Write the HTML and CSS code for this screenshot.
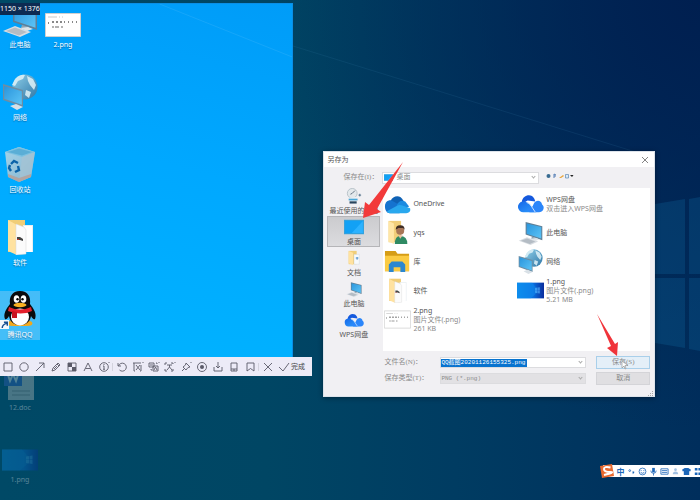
FILE: index.html
```html
<!DOCTYPE html>
<html lang="zh-CN">
<head>
<meta charset="utf-8">
<title>另存为</title>
<link rel="stylesheet" href="styles.css">
</head>
<body>
<svg class="defs" aria-hidden="true">
  <defs>
    <linearGradient id="scr" x1="0" y1="0" x2="1" y2="1"><stop offset="0" stop-color="#2a95dc"/><stop offset="1" stop-color="#5cc4f6"/></linearGradient>
    <linearGradient id="globe" x1="0" y1="0" x2="1" y2="1"><stop offset="0" stop-color="#8fd0ea"/><stop offset="1" stop-color="#2f76a6"/></linearGradient>
    <linearGradient id="bin" x1="0" y1="0" x2="1" y2="1"><stop offset="0" stop-color="#a5d4ea"/><stop offset="1" stop-color="#86b4cd"/></linearGradient>
    <linearGradient id="wall" x1="0" y1="0" x2="1" y2="0"><stop offset="0" stop-color="#0a86e8"/><stop offset=".6" stop-color="#0a6fe0"/><stop offset="1" stop-color="#0a2c9c"/></linearGradient>
    <linearGradient id="wps" x1="0" y1="0" x2="1" y2="1"><stop offset="0" stop-color="#1567e8"/><stop offset="1" stop-color="#2f9dff"/></linearGradient>
  </defs>
  <symbol id="i-pc" viewBox="0 0 36 36">
    <path d="M11 3l24 6v20l-24-8z" fill="#5f7f96"/><path d="M12.500 5l21 5.200v16.600l-21-7z" fill="url(#scr)"/>
    <path d="M20 24l7 2-1 3-7-2z" fill="#8fa3b2"/><path d="M1 30l12-5 16 6-11 5z" fill="#d8dde2"/><path d="M4 30l9-3.500 12 4.500-8 3.500z" fill="#b4bcc4"/>
    <path d="M18 27l8-1 5 2-6 2z" fill="#dfe4e8"/>
  </symbol>
  <symbol id="i-net" viewBox="0 0 36 36">
    <circle cx="23" cy="13" r="12.500" fill="url(#globe)"/>
    <path d="M13 5q5-5 10-4l-2 4-5 2-3 5-3-1zM25 2l6 3 3 6-2 5-4-5-2-4zM24 16l5 2-2 6-4-3z" fill="#dff2f8" opacity=".85"/>
    <path d="M1 10l20 6v17L1 26z" fill="#6d8da3"/><path d="M2.200 12l17.600 5.200v13.600L2.200 24.800z" fill="url(#scr)"/>
    <path d="M8 32l6-2 7 3-6 3z" fill="#d8e0e6"/>
  </symbol>
  <symbol id="i-bin" viewBox="0 0 36 36">
    <path d="M3 6l14-5 16 5-4 25-12 5-11-5z" fill="url(#bin)"/><path d="M3 6l14-5 16 5-13 5z" fill="#7cc2e2"/><path d="M6 6l11-3.500L30 6l-10 3.500z" fill="#5aaed6"/>
    <path d="M20 11l13-5-4 25-12 5z" fill="#a7c3d3" opacity=".7"/><path d="M6 31l11 5 12-5v-3l-12 4-11-4z" fill="#b79e96" opacity=".8"/>
    <path d="M9 18l3-3 4 2M16 20l1 4-4 2M9 25l-2-3 1-3" fill="none" stroke="#0b63a8" stroke-width="2.400"/>
  </symbol>
  <symbol id="i-folder" viewBox="0 0 36 36">
    <path d="M6 1h17v32H6z" fill="#f0cd77"/><path d="M6 1l9 5v30l-9-4z" fill="#ffe2a0"/>
    <path d="M21 6h10v27H21z" fill="#e9eef2"/><path d="M22 7h8v26h-8z" fill="#fff"/><path d="M14 5l8 3 2 3v24l-10 1z" fill="#fbfbfb" stroke="#d4d4d4" stroke-width=".5"/>
    <path d="M15 18l3 0 3 2v2l-3-1-3 0z" fill="#444"/><path d="M15 20h2v1h-2z" fill="#c63b2b"/>
  </symbol>
  <symbol id="i-qq" viewBox="0 0 36 36">
    <path d="M6 31q6-4 12 0 6-4 12 0 2 4-5 4H11q-7 0-5-4z" fill="#f2a81d"/>
    <path d="M18 0C10 0 7 6 8 13 4 18 1 23 3 28c1 1 3-1 4-3 1 6 5 9 11 9s10-3 11-9c1 2 3 4 4 3 2-5-1-10-5-15C29 6 26 0 18 0z" fill="#0b0b0d"/>
    <ellipse cx="18" cy="26" rx="9" ry="8.500" fill="#fff"/><ellipse cx="14.500" cy="8" rx="2.800" ry="3.800" fill="#fff"/><ellipse cx="21.500" cy="8" rx="2.800" ry="3.800" fill="#fff"/>
    <circle cx="15.500" cy="8.300" r="1.200"/><circle cx="20.500" cy="8.300" r="1.200"/><ellipse cx="18" cy="14" rx="6.500" ry="2.200" fill="#f9b221"/>
    <path d="M7 16q11 5 22 0l1 4q-11 5-24 0z" fill="#e3202c"/><path d="M10 20l5 1v6h-5z" fill="#c9131f"/>
  </symbol>
  <symbol id="i-shot" viewBox="0 0 36 24">
    <path d="M.5.5h35v23H.5z" fill="#fff" stroke="#d0d0d0"/><path d="M3 4h9M14 4h1M17 4h1" stroke="#c9c9c9"/>
    <path d="M3 10h1M7 9h2M11 9h2M15 9h2M19 9h1M23 9h1M27 9h1M31 9h1" stroke="#888" stroke-width="2"/><path d="M7 14h2M10 14h4M16 14h2" stroke="#999" stroke-width="1.500"/>
  </symbol>
  <symbol id="i-wall" viewBox="0 0 36 21">
    <path d="M0 0h36v21H0z" fill="url(#wall)"/><path d="M0 0h20l7 8v5l-9 8H0z" fill="#139af5" opacity=".35"/><path d="M24 7l3-.5v3.500h-3zM27.500 6.500l3-.5v4h-3zM24 10.500h3v3.500l-3-.5zM27.500 10.500h3v4l-3-.5z" fill="#59b6ff" opacity=".6"/>
  </symbol>
  <symbol id="i-doc" viewBox="0 0 36 36">
    <path d="M6 2h26v34H6z" fill="#e0d2c6"/><path d="M10 27h18M10 31h18" stroke="#9c8f86"/><path d="M2 4h18v18H2z" fill="#3b63c4"/><path d="M5 8l3 9 3-7 3 7 3-9" fill="none" stroke="#fff" stroke-width="2"/>
  </symbol>
  <symbol id="i-onedrive" viewBox="0 0 28 20">
    <path d="M7 7C9 2 17 0 20 7l-2 6-11 2z" fill="#0f62b5"/><path d="M1 13c0-5 4-7 7-6l14 8-6 5H6c-3 0-5-3-5-7z" fill="#1573cf"/>
    <path d="M13 12c2-5 6-6 9-4l4 5-5 3z" fill="#1b8be0"/><path d="M3 18l11-6q2-1 5 0l8 3c1 3-1 5-4 5H6q-2 0-3-2z" fill="#29a8ee"/>
  </symbol>
  <symbol id="i-wpscloud" viewBox="0 0 28 20">
    <path d="M5 8C6 1 15-1 18 5l1 3-8-1-5 3z" fill="#1559dd"/><path d="M7 19a5.500 5.500 0 0 1-1-11c4-1 7 2 9 5l5 6z" fill="url(#wps)"/>
    <path d="M13 19l-3-3q6-1 7-5c2-5 8-5 9 0 3 2 2 8-3 8z" fill="#2b86fa"/><path d="M10 9q3 0 5 4l4 6" fill="none" stroke="#cfe4ff" stroke-width="1"/>
  </symbol>
  <symbol id="i-user" viewBox="0 0 28 28">
    <path d="M4 1h14v24H4z" fill="#f1cf7b"/><path d="M4 1l6 3v23l-6-3z" fill="#ffe6a6"/><circle cx="17" cy="12" r="4.500" fill="#a87657"/><path d="M12 11q0-5 5-5t5 5l-2-2h-5z" fill="#3f2d25"/>
    <path d="M11 27q0-9 6-9 8 0 8 9z" fill="#2f8a63"/><path d="M15 17l2 4 3-4z" fill="#e9c1a4"/>
  </symbol>
  <symbol id="i-lib" viewBox="0 0 28 22">
    <path d="M1 0h11l2 3h12v18H1z" fill="#d69d16"/><path d="M1 5h25v16H1z" fill="#fbcb42"/><path d="M5 22v-8l3-3h11l3 3v8h-5v-5h-7v5z" fill="#2c87cf"/>
  </symbol>
  <symbol id="i-desk" viewBox="0 0 18 13"><path d="M0 0h18v13H0z" fill="#35a1dc"/><path d="M1 1h16v11H1z" fill="#12a1f5"/><path d="M17 1v11H7z" fill="#2cb2ff"/></symbol>
  <symbol id="i-recent" viewBox="0 0 20 18">
    <circle cx="8" cy="6" r="5.500" fill="#e3e8eb" stroke="#b4bfc6"/><path d="M8 6l3-3M8 6l-2 1" stroke="#567"/><path d="M4 11l8-1 1 3-8 1z" fill="#eef3f7"/><path d="M4 12h10v2H4z" fill="#49a6d7"/><path d="M5 15h8v2.500H5z" fill="#28455e"/><path d="M15 8h3M16.500 6.500v3" stroke="#4b6b84"/>
  </symbol>
  <symbol id="i-docs" viewBox="0 0 18 18"><path d="M3 1h9v15H3z" fill="#f0cd77"/><path d="M3 1l5 2v14l-5-2z" fill="#ffe2a0"/><path d="M9 5h6v11H9z" fill="#f7fafc" stroke="#cfd8df" stroke-width=".5"/><path d="M11 9h3M12.500 8v3" stroke="#4487c7"/></symbol>
</svg>

<main class="desktop">
  <svg class="wallpaper" viewBox="0 0 700 500" preserveAspectRatio="none" aria-hidden="true">
    <path d="M293 46L655 158" stroke="#3c84b0" opacity=".14"/>
    <path d="M655 204l30-5v75h-30zM689 199l11-2v77h-11zM655 278h30v70l-30-5zM689 278h11v73l-11-2z" fill="#1584bd" opacity=".2"/>
  </svg>

  <section class="snip" aria-label="截图区域">
    <svg viewBox="0 0 293 354" preserveAspectRatio="none" aria-hidden="true"><path d="M160 0L293 53" stroke="#fff" opacity=".08"/></svg>
  </section>

  <div class="icons">
    <a href="#pc" class="icon"><svg><use href="#i-pc"/></svg><span>此电脑</span></a>
    <a href="#p2" class="icon second"><svg class="thumb"><use href="#i-shot"/></svg><span>2.png</span></a>
    <a href="#net" class="icon"><svg><use href="#i-net"/></svg><span>网络</span></a>
    <a href="#bin" class="icon"><svg><use href="#i-bin"/></svg><span>回收站</span></a>
    <a href="#soft" class="icon"><svg><use href="#i-folder"/></svg><span>软件</span></a>
    <a href="#qq" class="icon active"><svg><use href="#i-qq"/></svg><span>腾讯QQ</span>
      <svg class="shortcut" viewBox="0 0 8 8"><path d="M0 0h8v8H0z" fill="#f4f8fb"/><path d="M2 7q0-3 4-4M3.500 2H6.500V5" fill="none" stroke="#164f91" stroke-width="1.300"/></svg></a>
    <a href="#doc" class="icon dim"><svg><use href="#i-doc"/></svg><span>12.doc</span></a>
    <a href="#p1" class="icon dim"><svg class="thumb"><use href="#i-wall"/></svg><span>1.png</span></a>
  </div>
  <output class="snip-size">1150 × 1376</output>

  <div class="tools" role="toolbar" aria-label="截图工具">
    <button aria-label="矩形"><svg viewBox="0 0 12 12"><path d="M2 2h8v8H2z"/></svg></button>
    <button aria-label="椭圆"><svg viewBox="0 0 12 12"><circle cx="6" cy="6" r="4.200"/></svg></button>
    <button aria-label="箭头"><svg viewBox="0 0 12 12"><path d="M2 10l8-8M5 2h5v5"/></svg></button>
    <button aria-label="画笔"><svg viewBox="0 0 12 12"><path d="M2 10l1-3 5-5 2 2-5 5zM7 3l2 2M4 8l3-3"/></svg></button>
    <button aria-label="马赛克"><svg viewBox="0 0 12 12"><path d="M2 2h8v8H2z"/><path class="fill" d="M2 2h4v4H2zM6 6h4v4H6z"/></svg></button>
    <button aria-label="文字"><svg viewBox="0 0 12 12"><path d="M2 10l4-8 4 8M3.500 7.500h5"/></svg></button>
    <button aria-label="序号"><svg viewBox="0 0 12 12"><circle cx="6" cy="6" r="4.300"/><path d="M5 5h1v3M5 8.300h2M6 3v1M11 1v1"/></svg></button>
    <i></i>
    <button aria-label="撤销"><svg viewBox="0 0 12 12"><path d="M2 2v3h3M2.500 5a4 4 0 1 1 1 4"/></svg></button>
    <button aria-label="长截图"><svg viewBox="0 0 12 12"><path d="M1 2h8M2 2v8M9 4v6M2 10h1M8 10h1M4 4l4 5M8 4L4 9M11 1v1"/></svg></button>
    <button aria-label="翻译"><svg viewBox="0 0 12 12"><path d="M1 2h5v4H1zM5 5h5v5H5zM2 4h3M3 8v1h1M6 9l1.500-3L9 9M8 2h1v1M11 1v1"/></svg></button>
    <button aria-label="识别文字"><svg viewBox="0 0 12 12"><path d="M1 4V2h2M7 2h2v1M1 8v2h2M7 10h2V8M3 4h5M5.500 4v2L3 9M5.500 6L8 9M11 1v1"/></svg></button>
    <button aria-label="钉住"><svg viewBox="0 0 12 12"><path d="M6 2l4 4-2 .5L6 9 3 6l2.500-2zM4.500 7.500L2 10M11 1v1"/></svg></button>
    <button aria-label="录制"><svg viewBox="0 0 12 12"><circle cx="6" cy="6" r="4.500"/><circle class="fill" cx="6" cy="6" r="2"/></svg></button>
    <button aria-label="保存"><svg viewBox="0 0 12 12"><path d="M6 1v6M4 5l2 2 2-2M2 6v4h8V6"/></svg></button>
    <button aria-label="发送到手机"><svg viewBox="0 0 12 12"><path d="M3 2h6v8H3zM3 8h6M5 9h2"/></svg></button>
    <button aria-label="收藏"><svg viewBox="0 0 12 12"><path d="M3 2h7v8L6.500 7.500 3 10z"/></svg></button>
    <i></i>
    <button aria-label="取消截图"><svg viewBox="0 0 12 12"><path d="M2 2l8 8M10 2l-8 8"/></svg></button>
    <button class="done"><svg viewBox="0 0 12 12"><path d="M1 6l4 4 6-8"/></svg>完成</button>
  </div>

  <form class="dialog" role="dialog" aria-labelledby="dlg-title">
    <header class="titlebar"><h1 id="dlg-title">另存为</h1><button type="button" aria-label="关闭"><svg viewBox="0 0 8 8"><path d="M1 1l6 6M7 1L1 7" stroke="#666" stroke-width=".8"/></svg></button></header>
    <div class="lookin">
      <label for="folder">保存在(I)：</label>
      <div class="field white"><svg class="mini"><use href="#i-desk"/></svg><select id="folder"><option>桌面</option></select></div>
      <svg class="nav" viewBox="0 0 28 6" aria-hidden="true"><circle cx="2.500" cy="3" r="2" fill="#386b91"/><path d="M8 5V1l2 1M8 3h2" stroke="#567fb5" fill="none"/><path d="M13 5l4-3 1 1-3 2z" fill="#e8a53b"/><path d="M19.500 1.500h3v3.500h-3z" fill="#dceaf5" stroke="#5a87b5" stroke-width=".7"/><path d="M24 2h3.500L26 4z" fill="#222"/></svg>
    </div>
    <div class="content">
      <nav class="places">
        <a href="#recent"><svg><use href="#i-recent"/></svg>最近使用的项目</a>
        <a href="#desk" class="current"><svg><use href="#i-desk"/></svg>桌面</a>
        <a href="#docs"><svg><use href="#i-docs"/></svg>文档</a>
        <a href="#mypc"><svg><use href="#i-pc"/></svg>此电脑</a>
        <a href="#wps"><svg><use href="#i-wpscloud"/></svg>WPS网盘</a>
      </nav>
      <div class="pane">
        <ul class="files">
          <li><svg><use href="#i-onedrive"/></svg><p>OneDrive</p></li>
          <li><svg><use href="#i-wpscloud"/></svg><p>WPS网盘<small>双击进入WPS网盘</small></p></li>
          <li><svg><use href="#i-user"/></svg><p>yqs</p></li>
          <li><svg><use href="#i-pc"/></svg><p>此电脑</p></li>
          <li><svg><use href="#i-lib"/></svg><p>库</p></li>
          <li><svg><use href="#i-net"/></svg><p>网络</p></li>
          <li><svg><use href="#i-folder"/></svg><p>软件</p></li>
          <li><svg><use href="#i-wall"/></svg><p>1.png<small>图片文件(.png)</small><small>5.21 MB</small></p></li>
          <li><svg><use href="#i-shot"/></svg><p>2.png<small>图片文件(.png)</small><small>261 KB</small></p></li>
        </ul>
        <div class="bottom">
          <label for="name">文件名(N)：</label>
          <div class="field white"><input id="name" type="text" value="QQ截图20201126155325.png"></div>
          <button type="button" class="save">保存(S)</button>
          <label for="type">保存类型(T)：</label>
          <div class="field gray"><select id="type"><option>PNG (*.png)</option></select></div>
          <button type="button">取消</button>
        </div>
      </div>
    </div>
    <svg class="grip" viewBox="0 0 6 6" aria-hidden="true"><path d="M4 1h1v1H4zM2 3h1v1H2zM4 3h1v1H4zM0 5h1v1H0zM2 5h1v1H2zM4 5h1v1H4z" fill="#aaa"/></svg>
    <svg class="arrow first" viewBox="0 0 42 58" aria-hidden="true"><path d="M41 1L15 48l4 3L1 57 3 41l4 3z" fill="#f23a3a"/></svg>
    <svg class="arrow last" viewBox="0 0 24 44" aria-hidden="true"><path d="M1 1l18 30 3-2-1 14L11 35l4-2z" fill="#f0343a"/></svg>
    <svg class="pointer" viewBox="0 0 8 10" aria-hidden="true"><path d="M1 1v7l2-2 1 3 1-.5-1-3h3z" fill="#fff" stroke="#888" stroke-width=".6"/></svg>
  </form>

  <aside class="ime" aria-label="输入法">
    <svg class="logo" viewBox="0 0 16 16"><path d="M1 3l12-2 2 12-12 2z" fill="#e8692f"/><path d="M11.500 4.500Q5 3 5 6t6 3-6 3" fill="none" stroke="#fff" stroke-width="2"/></svg>
    <button>中</button>
    <button aria-label="标点"><svg viewBox="0 0 10 10"><circle cx="3" cy="4" r="1"/><path class="solid" d="M6 5h2v1L6.500 8z"/></svg></button>
    <button aria-label="表情"><svg viewBox="0 0 10 10"><circle cx="5" cy="5" r="3.800"/><path d="M3.500 3.500v1M6.500 3.500v1M3 6q2 2 4 0"/></svg></button>
    <button aria-label="语音"><svg viewBox="0 0 10 10"><path class="solid" d="M3.500 1h3v5h-3z"/><path d="M2 4q0 3 3 3t3-3M5 7v2.500"/></svg></button>
    <button aria-label="键盘"><svg viewBox="0 0 10 10"><path d="M1 2h8v6H1zM2 4h6M2 6h6"/></svg></button>
    <button aria-label="账户" class="pale"><svg viewBox="0 0 10 10"><circle class="solid" cx="5" cy="3" r="1.500"/><path class="solid" d="M2 8q0-3 3-3t3 3z"/></svg></button>
    <button aria-label="皮肤"><svg viewBox="0 0 10 10"><path class="solid" d="M3 1h4l3 2-1 2-1-.5V9H2V4.500L1 5 0 3z"/></svg></button>
    <button aria-label="工具箱"><svg viewBox="0 0 10 10"><path class="solid" d="M2 1h3v3H2zM6 1h3v3H6zM2 6h3v3H2zM6 6h3v3H6z"/></svg></button>
  </aside>
</main>
</body>
</html>
```
FILE: styles.css
```css
* { box-sizing: border-box; }

body {
  margin: 0;
  font: 7px/9px "Noto Sans", "Noto Sans CJK SC", sans-serif;
  color: #555;
}

button, input, select {
  margin: 0;
  padding: 0;
  border: 0;
  background: none;
  font: inherit;
  color: inherit;
}

a { color: inherit; text-decoration: none; }
svg { display: block; flex: none; }
.defs { position: absolute; width: 0; height: 0; }

.desktop {
  position: relative;
  height: 100vh;
  overflow: hidden;
  background:
    radial-gradient(circle at 100% 0, #001f50 0, rgba(0, 31, 80, 0) 50%),
    linear-gradient(90deg, #004966 0, #004664 38%, #003c62 65%, #002e5c 100%);
}

.wallpaper { position: absolute; inset: 0; width: 100%; height: 100%; }

/* captured region */
.snip {
  position: absolute;
  top: 3px;
  left: 0;
  width: 41.9%;
  height: 71%;
  border: solid #0a8fe6;
  border-width: 1px 1px 0 0;
  background: linear-gradient(195deg, #009cf8 0, #00a8ff 45%, #00b4ff 100%);
}
.snip > svg { width: 100%; height: 100%; }
.snip-size {
  position: absolute;
  top: 3px;
  left: 0;
  padding: 1px 0;
  background: #0c2b52;
  color: #fff;
  line-height: 10px;
  white-space: nowrap;
}

/* desktop icons */
.icons {
  position: absolute;
  top: 0;
  left: 0;
  display: grid;
  grid-template-columns: 40px 46px;
  grid-template-rows: 50px;
  grid-auto-rows: 14.5vh;
  align-items: end;
  color: #fff;
}
.icon {
  grid-column: 1;
  position: relative;
  display: flex;
  flex-direction: column;
  align-items: center;
  gap: 3px;
  line-height: 10px;
}
.icon svg { width: 36px; height: 36px; }
.icon .thumb { height: 24px; }
.icon span { text-shadow: 0 1px 1px rgba(0, 40, 90, .5); }
.icon.second { grid-column: 2; }
.icon.active { background: rgba(150, 205, 240, .45); }
.icon.dim { opacity: .32; }
.icon .shortcut { position: absolute; left: 0; bottom: 11px; width: 9px; height: 9px; }

/* capture toolbar */
.tools {
  position: absolute;
  top: calc(71% + 2px);
  left: 0;
  display: flex;
  align-items: center;
  height: 19px;
  padding-right: 7px;
  background: #ecebf7;
  color: #444;
}
.tools button { display: flex; justify-content: center; align-items: center; gap: 1px; width: 16px; }
.tools .done { width: auto; padding-left: 2px; }
.tools svg { width: 12px; height: 12px; fill: none; stroke: #5a5a68; stroke-width: .9; }
.tools .fill { fill: #5a5a68; stroke: none; }
.tools i { width: 1px; height: 8px; margin: 0 1px 0 0; background: #d3d3de; }

/* save dialog */
.dialog {
  position: absolute;
  top: 30.2%;
  left: 46.2%;
  right: 6.4%;
  padding-bottom: 11px;
  border: 1px solid #dde3ea;
  background: #f1f0f3;
  box-shadow: 0 1px 5px rgba(0, 0, 0, .4);
}
.titlebar {
  display: flex;
  justify-content: space-between;
  align-items: center;
  height: 15px;
  padding: 0 5px 0 3px;
  background: #fff;
}
.titlebar h1 { margin: 0; font-size: 7px; font-weight: 400; }
.titlebar svg { width: 8px; height: 8px; }

.lookin { display: flex; align-items: center; height: 21px; padding-left: 19px; font-family: "Liberation Serif", "Noto Sans CJK SC", serif; color: #8a8a8a; }
.lookin label { width: 39px; white-space: nowrap; }
.lookin .field { flex: 0 1 157px; height: 12px; }
.nav { width: 28px; height: 6px; margin: 0 0 4px 7px; }

.field { position: relative; display: flex; align-items: center; min-width: 0; border: 1px solid #dcdcdf; }
.field::after {
  content: "";
  position: absolute;
  right: 3px;
  width: 2px;
  height: 2px;
  margin-bottom: 2px;
  border: solid #aaa;
  border-width: 0 1px 1px 0;
  transform: rotate(45deg);
}
.white { background: #fff; }
.gray { background: #e2e1e4; }
.field select { flex: 1; min-width: 0; height: 100%; padding-left: 3px; appearance: none; }
.mini { width: 9px; height: 7px; margin-left: 1px; }

.content { display: flex; }
.places { flex: none; width: 59px; padding-left: 3px; margin-top: -3px; }
.places a {
  display: flex;
  flex-direction: column;
  align-items: center;
  gap: 2px;
  width: 53px;
  height: 31px;
  padding: 3px 0 0;
  white-space: nowrap;
}
.places svg { width: 20px; height: 16px; }
.places .current { padding-top: 2px; border: 1px solid #b5b5b8; background: linear-gradient(#cbcbce, #dcdcdf); }

.pane { flex: 1; min-width: 0; padding-right: 4px; }
.files {
  display: grid;
  grid-template-columns: 1fr 1fr;
  grid-auto-rows: 29px;
  margin: 0;
  padding: 1px 0 17px 1px;
  list-style: none;
  background: #fff;
}
.files li { display: flex; align-items: center; gap: 2px; }
.files svg { width: 27px; height: 25px; }
.files p { margin: 0; white-space: nowrap; }
.files small { display: block; font-size: 7px; color: #8a8a8a; }

.bottom {
  display: grid;
  grid-template-columns: 57px 1fr 54px;
  row-gap: 3px;
  align-items: center;
  padding-top: 5px;
  font-family: "Liberation Serif", "Noto Sans CJK SC", serif;
  color: #8a8a8a;
}
.bottom label { padding-left: 1px; white-space: nowrap; }
.bottom .field { height: 11px; margin-right: 10px; }
.bottom button { height: 13px; border: 1px solid #d4d4d8; background: #e0dfe2; }
.bottom .save { border-color: #a9cfea; background: #e4eff8; }
.bottom input, .bottom select { font: 6px/8px "Liberation Mono", "Noto Sans CJK SC", monospace; }
.bottom input { width: 86px; height: 8px; background: #0873cf; color: #fff; }
.bottom select { padding-left: 0; }

.grip { position: absolute; right: 0; bottom: 0; width: 6px; height: 6px; }
.arrow { position: absolute; pointer-events: none; }
.arrow.first { top: 9px; left: 38px; width: 42px; height: 58px; }
.arrow.last { right: 34px; bottom: 39px; width: 24px; height: 44px; }
.pointer { position: absolute; right: 25px; bottom: 26px; width: 8px; height: 10px; }

/* input method bar */
.ime {
  position: absolute;
  right: -3px;
  bottom: 23px;
  display: flex;
  align-items: center;
  height: 12px;
  padding-left: 12px;
  background: #fff;
  color: #1c66b8;
}
.ime button { display: flex; justify-content: center; width: 11px; font-size: 8px; font-weight: 700; }
.ime button svg { width: 9px; height: 9px; fill: none; stroke: #1c66b8; stroke-width: .9; }
.ime .solid { fill: #1c66b8; stroke: none; }
.ime .pale { opacity: .4; }
.ime .logo { position: absolute; left: -4px; top: -2px; width: 16px; height: 16px; }
```
